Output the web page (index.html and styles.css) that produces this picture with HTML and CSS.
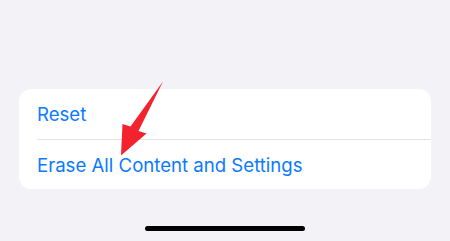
FILE: index.html
```html
<!DOCTYPE html>
<html>
<head>
<meta charset="utf-8">
<link rel="stylesheet" href="styles.css">
</head>
<body>
<div class="screen">
  <div class="group">
    <div class="row"><span class="label">Reset</span></div>
    <div class="row"><span class="label">Erase All Content and Settings</span></div>
  </div>
  <div class="home-bar"></div>
  <svg class="arrow" width="450" height="241" viewBox="0 0 450 241">
    <path d="M163,81.5 L138.5,131 L146.5,133.5 L121,155.5 L122.5,124 L130.5,126.5 Z" fill="#f2222f"/>
  </svg>
</div>
</body>
</html>
```

FILE: styles.css
```css
* { box-sizing: border-box; }
html, body { margin: 0; padding: 0; }
body {
  background: #f2f2f7;
  font-family: Inter, "Noto Sans", sans-serif;
}
.screen {
  position: relative;
  width: 450px;
  height: 241px;
  display: flex;
  flex-direction: column;
  align-items: center;
  padding-top: 89px;
}
.group {
  width: 412px;
  background: #ffffff;
  border-radius: 12px;
  padding-left: 18px;
  overflow: hidden;
}
.row {
  height: 50px;
  display: flex;
  align-items: center;
}
.row + .row {
  border-top: 1px solid #e2e2e6;
  height: 50px;
}
.label {
  color: #0a7aff;
  font-size: 18.6px;
  letter-spacing: 0;
}
.home-bar {
  margin-top: 37px;
  width: 160px;
  height: 5px;
  border-radius: 3px;
  background: #000;
}
.arrow {
  position: absolute;
  left: 0;
  top: 0;
  pointer-events: none;
}
```
